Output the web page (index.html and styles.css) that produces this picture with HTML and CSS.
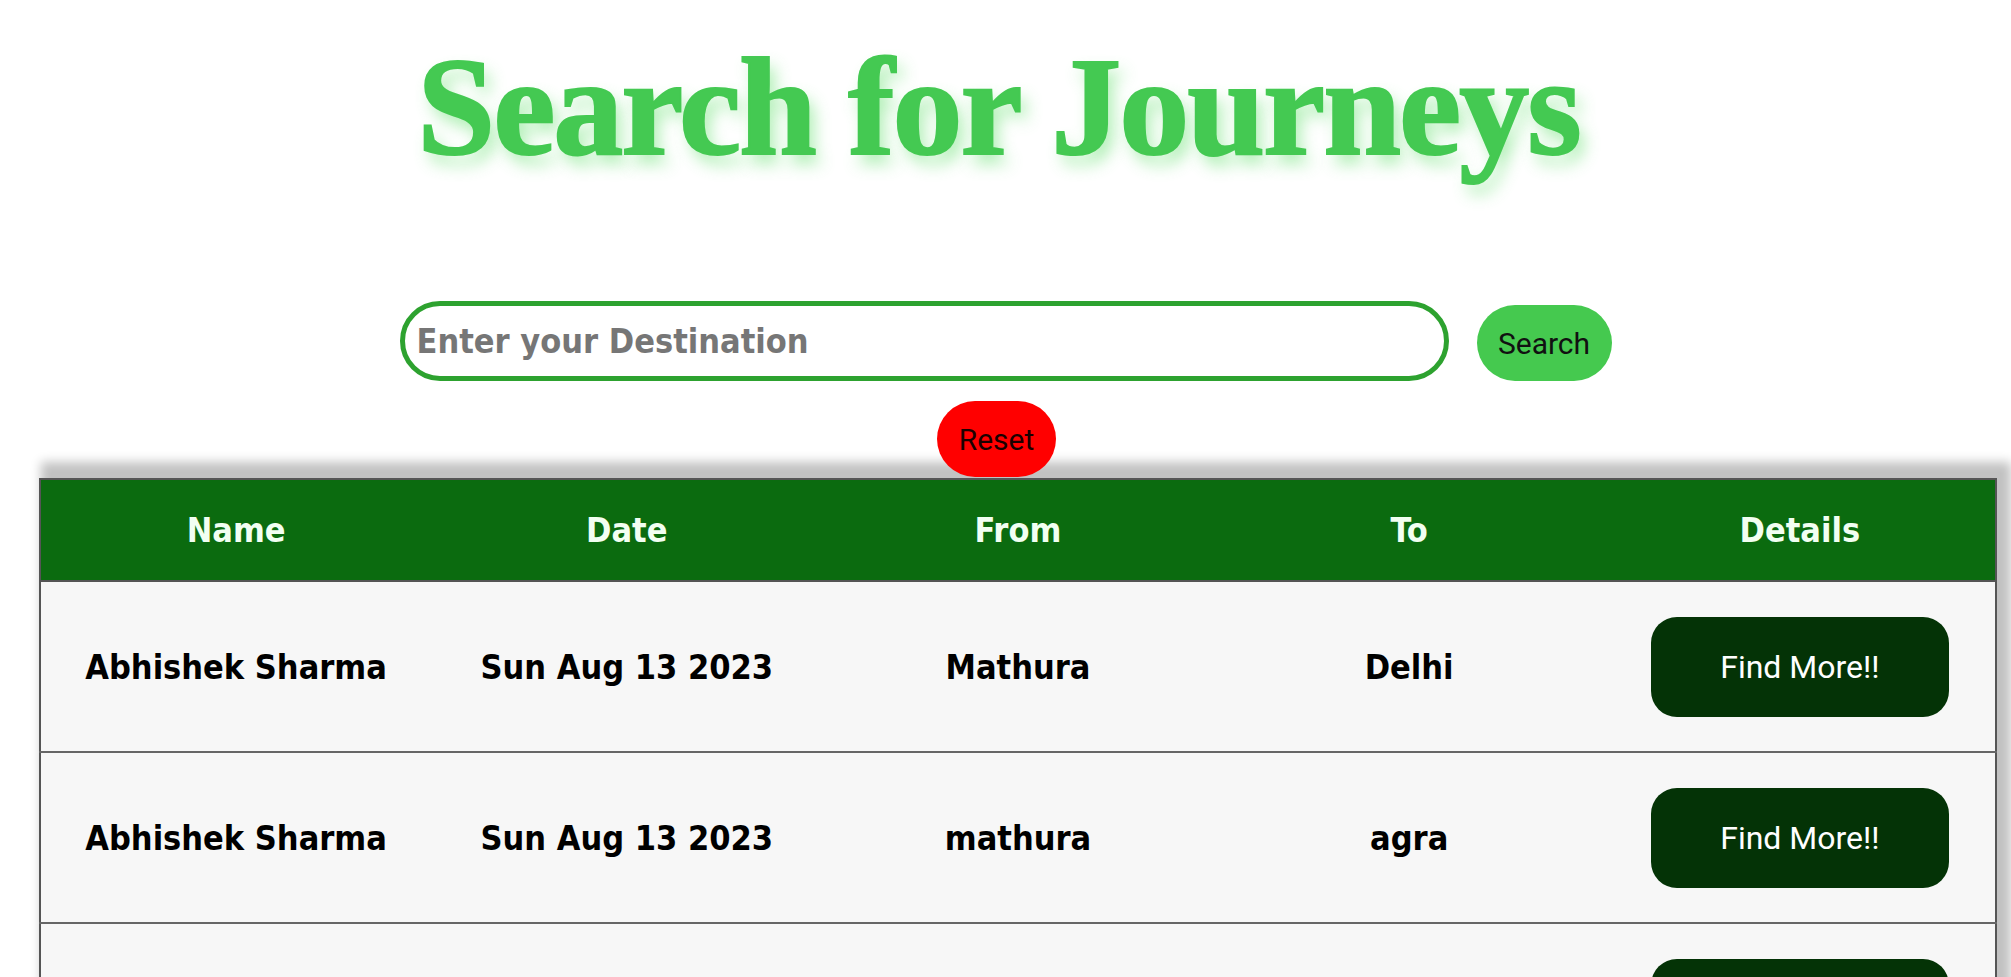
FILE: index.html
```html
<!DOCTYPE html>
<html lang="en">
<head>
<meta charset="utf-8">
<title>Search for Journeys</title>
<link rel="stylesheet" href="styles.css">
</head>
<body>
<main class="page">
  <h1 class="title">Search for Journeys</h1>
  <form class="search-row" onsubmit="return false">
    <input class="search-input" type="text" placeholder="Enter your Destination">
    <button class="btn btn-search" type="submit">Search</button>
  </form>
  <div class="reset-row">
    <button class="btn btn-reset" type="button">Reset</button>
  </div>
  <div class="table-wrap">
    <table class="journeys">
      <thead>
        <tr>
          <th>Name</th>
          <th>Date</th>
          <th>From</th>
          <th>To</th>
          <th>Details</th>
        </tr>
      </thead>
      <tbody>
        <tr>
          <td>Abhishek Sharma</td>
          <td>Sun Aug 13 2023</td>
          <td>Mathura</td>
          <td>Delhi</td>
          <td><button class="btn btn-more" type="button">Find More!!</button></td>
        </tr>
        <tr>
          <td>Abhishek Sharma</td>
          <td>Sun Aug 13 2023</td>
          <td>mathura</td>
          <td>agra</td>
          <td><button class="btn btn-more" type="button">Find More!!</button></td>
        </tr>
        <tr>
          <td>Abhishek Sharma</td>
          <td>Sun Aug 13 2023</td>
          <td>Agra</td>
          <td>Delhi</td>
          <td><button class="btn btn-more" type="button">Find More!!</button></td>
        </tr>
      </tbody>
    </table>
  </div>
</main>
</body>
</html>
```

FILE: styles.css
```css
html, body {
  margin: 0;
  padding: 0;
  background: #ffffff;
}

body {
  font-family: "DejaVu Sans Condensed", "DejaVu Sans", sans-serif;
  overflow: hidden;
}

.page {
  display: flex;
  flex-direction: column;
}

.title {
  margin: 37px 14px 0 0;
  height: 140px;
  line-height: 140px;
  text-align: center;
  font-family: "Liberation Serif", serif;
  font-weight: 700;
  font-size: 140px;
  letter-spacing: -2px;
  color: #44c952;
  -webkit-text-stroke: 2px #44c952;
  text-shadow: 6px 10px 16px rgba(80, 220, 90, 0.45);
}

.search-row {
  margin: 123px 0 0 0;
  display: flex;
  justify-content: center;
  align-items: center;
  gap: 28px;
}

.search-input {
  box-sizing: border-box;
  width: 1049px;
  height: 80px;
  border: 5px solid #2da22f;
  border-radius: 40px;
  padding: 0 12px;
  font-family: "DejaVu Sans Condensed", "DejaVu Sans", sans-serif;
  font-weight: 700;
  font-size: 34px;
  color: #222;
  outline: none;
  background: #fff;
}

.search-input::placeholder {
  color: #767676;
  opacity: 1;
}

.btn {
  border: none;
  cursor: pointer;
  font-family: Roboto, "Liberation Sans", sans-serif;
  font-weight: 400;
  padding: 0;
}

.btn-search {
  width: 135px;
  height: 76px;
  margin-top: 5px;
  border-radius: 38px;
  background: #45c94f;
  color: #111;
  font-size: 30px;
}

.reset-row {
  display: flex;
  justify-content: center;
  margin-top: 20px;
  position: relative;
  z-index: 2;
}

.btn-reset {
  width: 119px;
  height: 76px;
  margin-right: 18px;
  border-radius: 38px;
  background: #ff0000;
  color: #1a0000;
  font-size: 30px;
}

.table-wrap {
  padding: 1px 14px 0 39px;
  position: relative;
  z-index: 1;
}

.journeys {
  width: 100%;
  border-collapse: collapse;
  table-layout: fixed;
  border: 2px solid #555;
  box-shadow: 8px -10px 10px 6px #c2c2c2;
  background: #f7f7f7;
}

.journeys th {
  height: 100px;
  background: #0b6b0f;
  color: #f2fff2;
  font-size: 34px;
  font-weight: 700;
  text-align: center;
  padding: 0;
  border-bottom: 2px solid #555;
}

.journeys td {
  height: 169px;
  text-align: center;
  vertical-align: middle;
  padding: 0;
  font-size: 34px;
  font-weight: 700;
  color: #000;
  border-bottom: 2px solid #666;
}

.btn-more {
  width: 298px;
  height: 100px;
  border-radius: 26px;
  background: #043306;
  color: #ffffff;
  font-size: 32px;
}
```
